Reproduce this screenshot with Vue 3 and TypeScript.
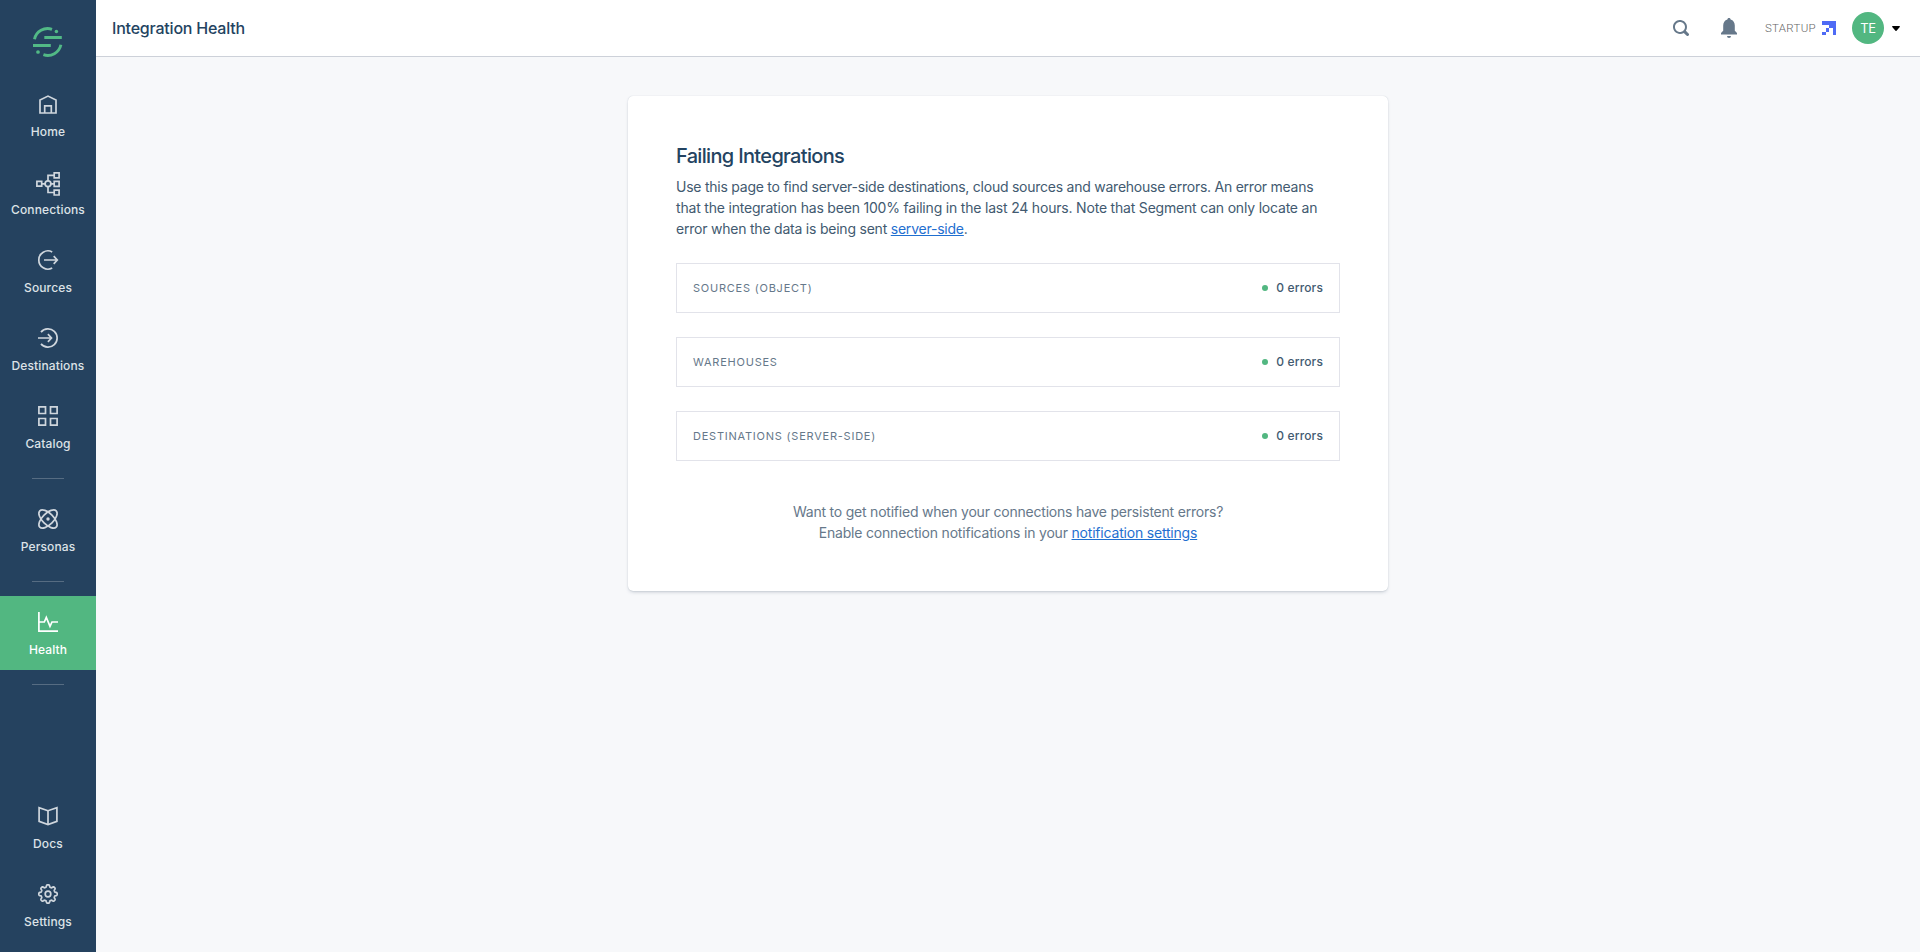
<script setup lang="ts">
type IconName =
  | 'home' | 'connections' | 'sources' | 'destinations' | 'catalog'
  | 'personas' | 'health' | 'docs' | 'settings'

interface NavItem {
  label: string
  icon: IconName
  active?: boolean
}

const groups: NavItem[][] = [
  [
    { label: 'Home', icon: 'home' },
    { label: 'Connections', icon: 'connections' },
    { label: 'Sources', icon: 'sources' },
    { label: 'Destinations', icon: 'destinations' },
    { label: 'Catalog', icon: 'catalog' },
  ],
  [{ label: 'Personas', icon: 'personas' }],
  [{ label: 'Health', icon: 'health', active: true }],
  [
    { label: 'Docs', icon: 'docs' },
    { label: 'Settings', icon: 'settings' },
  ],
]

const sections = [
  { name: 'Sources (Object)', errors: 0 },
  { name: 'Warehouses', errors: 0 },
  { name: 'Destinations (Server-Side)', errors: 0 },
]

// Outline of an eight-toothed gear centred in a 20px box.
function gearPath(): string {
  const steps = 160
  const points: string[] = []
  for (let i = 0; i < steps; i++) {
    const a = (i / steps) * Math.PI * 2
    const r = 8.1 + 1.1 * Math.tanh(2.2 * Math.cos(8 * a))
    points.push(`${(10 + r * Math.cos(a)).toFixed(2)} ${(10 + r * Math.sin(a)).toFixed(2)}`)
  }
  return `M${points.join('L')}Z`
}

// Stroked paths on a 20×20 grid; the connections icon overflows it slightly.
const icons: Record<IconName, string[]> = {
  home: ['M2 19V6.1L10 2.1l8 4V19H2Z', 'M6.7 19v-7.2h6.6V19'],
  connections: [
    'M-1.1 9.4h4.8v4.8h-4.8z',
    'M16.2.9h4.9v4.9h-4.9z',
    'M16.2 9.4h4.9v4.9h-4.9z',
    'M16.2 18.1h4.9V23h-4.9z',
    'M12.9 11.8a2.9 2.9 0 1 1-5.8 0a2.9 2.9 0 1 1 5.8 0Z',
    'M3.7 11.8h3.4M12.9 11.8h3.3',
    'M10 8.9V3.4h6.2M10 14.7v5.8h6.2',
  ],
  sources: ['M14.2 1.9A9.15 9.15 0 1 0 14.2 18.1', 'M6 10h13M15.7 6.2L19.3 10l-3.6 3.8'],
  destinations: ['M3 4.1A9.15 9.15 0 1 1 3 15.9', 'M0 10h13.3M9.9 6.2l3.6 3.8-3.6 3.8'],
  catalog: ['M.9.9h6.6v6.6H.9z', 'M12.5.9h6.6v6.6h-6.6z', 'M.9 12.5h6.6v6.6H.9z', 'M12.5 12.5h6.6v6.6h-6.6z'],
  personas: [],
  health: ['M.9 0v19.1H20', 'M1 10h5.3l2-4.6 3.7 9L14 10h6'],
  docs: ['M10 4.7L1.1 1.6v13.8l8.9 3.2 8.9-3.2V1.6L10 4.7Z', 'M10 4.7v13.9'],
  settings: [gearPath(), 'M12.8 10a2.8 2.8 0 1 1-5.6 0a2.8 2.8 0 1 1 5.6 0Z'],
}
</script>

<template>
  <div class="app">
    <nav class="sidebar">
      <svg class="logo" viewBox="0 0 30 30">
        <g fill="none" stroke="currentColor" stroke-width="2.9">
          <path d="M1.5 12.2A13.4 13.4 0 0 1 19 2.3" />
          <path d="M27.9 17.8A13.4 13.4 0 0 1 10.4 27.7" />
        </g>
        <path fill="currentColor" d="M11.3 9h17.5v3H11.3zM0 17h17.8v2.9H0z" />
        <circle cx="23.4" cy="4.4" r="1.75" fill="currentColor" />
        <circle cx="5" cy="25" r="1.85" fill="currentColor" />
      </svg>
      <div v-for="(group, g) in groups" :key="g" class="group" :class="{ bottom: g === 3 }">
        <a v-for="item in group" :key="item.label" class="item" :class="{ active: item.active }">
          <svg class="icon" viewBox="0 0 20 20">
            <g v-if="item.icon === 'personas'">
              <ellipse cx="10" cy="10" rx="11.6" ry="5.6" transform="rotate(45 10 10)" />
              <ellipse cx="10" cy="10" rx="11.6" ry="5.6" transform="rotate(-45 10 10)" />
              <circle class="dot" cx="10" cy="10" r="1.7" />
            </g>
            <path v-for="d in icons[item.icon]" :key="d" :d="d" />
          </svg>
          <span class="label">{{ item.label }}</span>
        </a>
      </div>
    </nav>

    <div class="page">
      <header class="topbar">
        <h1 class="title">Integration Health</h1>
        <div class="tools">
          <svg class="search" viewBox="0 0 16 16">
            <path
              fill-rule="evenodd"
              d="M15.55 13.43l-2.67-2.68a6.94 6.94 0 0 0 1.11-3.76c0-3.87-3.13-7-7-7s-7 3.13-7 7 3.13 7 7 7c1.39 0 2.68-.42 3.76-1.11l2.68 2.67a1.498 1.498 0 1 0 2.12-2.12zm-8.56-1.44c-2.76 0-5-2.24-5-5s2.24-5 5-5 5 2.24 5 5-2.24 5-5 5z"
            />
          </svg>
          <svg class="bell" viewBox="0 0 16 20">
            <path d="M8 0c-1 0-1.6.7-1.6 1.6C3.7 2.3 2.2 4.7 2.2 7.6v5.2L0 15v1.6h16V15l-2.2-2.2V7.6c0-2.9-1.5-5.3-4.2-6C9.6.7 9 0 8 0ZM6 18a2 2 0 0 0 4 0Z" />
          </svg>
          <div class="plan">
            <span>STARTUP</span>
            <svg class="arrow" viewBox="0 0 4 4" shape-rendering="crispEdges">
              <path d="M0 0h4v4H3V2H2V1H0zM1 2h1v1H1zM0 3h1v1H0z" />
            </svg>
          </div>
          <div class="avatar">TE</div>
          <svg class="caret" viewBox="0 0 8 5"><path d="M.6 0h6.8a.6.6 0 0 1 .4 1L4.5 4.7a.7.7 0 0 1-1 0L.2 1a.6.6 0 0 1 .4-1Z" /></svg>
        </div>
      </header>

      <main class="content">
        <section class="card">
          <h2 class="heading">Failing Integrations</h2>
          <p class="intro">
            <span class="tight">Use this page to find server-side destinations, cloud sources and warehouse errors. An error means</span><br />
            <span class="loose">that the integration has been 100% failing in the last 24 hours. Note that Segment can only locate an</span><br />
            error when the data is being sent <a class="link">server-side</a>.
          </p>
          <div v-for="section in sections" :key="section.name" class="row">
            <span class="name">{{ section.name }}</span>
            <span class="status"><span class="count">{{ section.errors }} errors</span></span>
          </div>
          <p class="notice">
            Want to get notified when your connections have persistent errors?<br />
            <span class="loose">Enable connection notifications in your <a class="link">notification settings</a></span>
          </p>
        </section>
      </main>
    </div>
  </div>
</template>

<style>
body {
  margin: 0;
}
</style>

<style scoped>
.app {
  display: flex;
  height: 952px;
  overflow: hidden;
  background: #f7f8fa;
  font-family: Inter, "Liberation Sans", sans-serif;
}

h1,
h2,
p {
  margin: 0;
}

.sidebar {
  display: flex;
  flex-direction: column;
  flex: none;
  box-sizing: border-box;
  width: 96px;
  padding: 27px 0 10px;
  background: #25425f;
}

.logo {
  width: 30px;
  height: 30px;
  margin: 0 0 21px 33px;
  color: #52b986;
}

.group {
  display: flex;
  flex-direction: column;
  gap: 4px;
}

.group:not(:last-child)::after {
  content: "";
  width: 32px;
  height: 1px;
  margin: 10px auto 14px;
  background: #566c82;
}

.bottom {
  margin-top: auto;
}

.item {
  display: flex;
  flex-direction: column;
  align-items: center;
  box-sizing: border-box;
  height: 74px;
  padding-top: 16px;
  color: #cfd6dd;
}

.item.active {
  background: #52b781;
  color: #fff;
}

.icon {
  width: 20px;
  height: 20px;
  overflow: visible;
  fill: none;
  stroke: currentColor;
  stroke-width: 1.7;
}

.icon .dot {
  fill: currentColor;
  stroke: none;
}

.label {
  margin-top: 10px;
  font-size: 12px;
  font-weight: 550;
  line-height: 16px;
  letter-spacing: 0.13px;
  color: #dde2e7;
}

.active .label {
  color: #fff;
}

.page {
  flex: 1;
}

.topbar {
  display: flex;
  align-items: center;
  justify-content: space-between;
  height: 56px;
  padding: 0 20px 0 16px;
  border-bottom: 1px solid #cdd1d9;
  background: #fff;
}

.title {
  font-size: 16px;
  font-weight: 450;
  line-height: 24px;
  letter-spacing: -0.21px;
  color: #234361;
}

.tools {
  display: flex;
  align-items: center;
}

.search {
  width: 16px;
  height: 16px;
  fill: #66788a;
}

.bell {
  width: 16px;
  height: 20px;
  margin-left: 32px;
  fill: #66788a;
}

.plan {
  display: flex;
  align-items: center;
  margin-left: 28px;
  font-family: Roboto, Inter, sans-serif;
  font-size: 11.5px;
  font-weight: 300;
  color: #666;
}

.plan span {
  width: 51px;
  letter-spacing: 0.3px;
}

.arrow {
  width: 14px;
  height: 14px;
  margin-left: 6px;
  fill: #4f6bf5;
}

.avatar {
  width: 32px;
  height: 32px;
  margin-left: 16px;
  border-radius: 50%;
  background: #52b781;
  color: #fff;
  font-size: 13px;
  line-height: 33px;
  letter-spacing: -0.3px;
  text-align: center;
}

.caret {
  width: 8px;
  height: 5px;
  margin-left: 8px;
}

.content {
  display: flex;
  justify-content: center;
  padding-top: 39px;
}

.card {
  box-sizing: border-box;
  width: 760px;
  height: 495px;
  padding: 48px;
  border-radius: 5px;
  background: #fff;
  box-shadow: 0 0 1px rgba(67, 90, 111, 0.3), 0 2px 4px -2px rgba(67, 90, 111, 0.47);
}

.heading {
  font-size: 20px;
  font-weight: 500;
  line-height: 24px;
  letter-spacing: -0.67px;
  color: #234361;
}

.intro {
  margin: 8px 0 24px;
  font-size: 14px;
  line-height: 21px;
  letter-spacing: -0.22px;
  color: #425a70;
  white-space: nowrap;
}

.tight {
  letter-spacing: -0.243px;
}

.loose {
  letter-spacing: -0.195px;
}

.link {
  color: #1f6fd0;
  text-decoration: underline;
}

.row {
  display: flex;
  align-items: center;
  justify-content: space-between;
  box-sizing: border-box;
  height: 50px;
  margin-bottom: 24px;
  padding: 0 16px;
  border: 1px solid #e2e3ea;
}

.name {
  font-size: 11px;
  letter-spacing: 0.77px;
  text-transform: uppercase;
  color: #66788a;
}

.status {
  display: flex;
  align-items: center;
  font-size: 12px;
  font-weight: 550;
  letter-spacing: 0.14px;
  color: #425a70;
}

.count {
  padding-bottom: 1px;
}

.status::before {
  content: "";
  width: 6px;
  height: 6px;
  margin-right: 8px;
  border-radius: 50%;
  background: #52b781;
}

.notice {
  margin-top: 40px;
  font-size: 14px;
  line-height: 21px;
  letter-spacing: -0.215px;
  text-align: center;
  color: #66788a;
}
</style>
